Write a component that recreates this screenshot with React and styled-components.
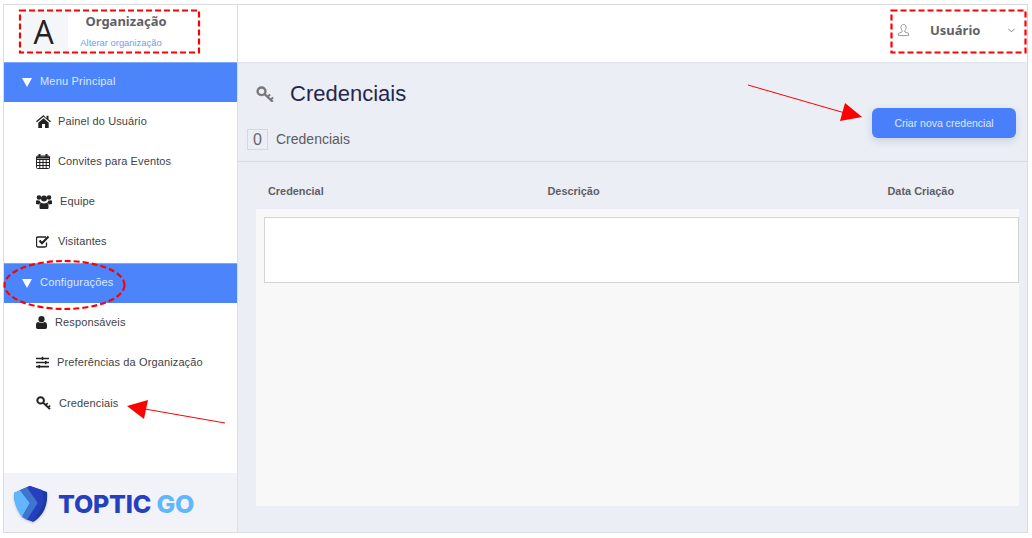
import styled, { createGlobalStyle } from 'styled-components';
import { ChevronDown } from 'lucide-react';
import { FaSlidersH } from 'react-icons/fa';

const GlobalStyle = createGlobalStyle`
  html, body {
    margin: 0;
    padding: 0;
    background: #fff;
    font-family: "Liberation Sans", Arial, sans-serif;
  }
`;

const Page = styled.div`
  position: relative;
  width: 1032px;
  height: 538px;
  padding: 4px 4px 0 3px;
  box-sizing: border-box;
  overflow: hidden;
`;
const Frame = styled.div`
  display: grid;
  grid-template-columns: 234px 1fr;
  height: 529px;
  border: 1px solid #dcdcdc;
  box-sizing: border-box;
`;
const Sidebar = styled.aside`
  display: flex;
  flex-direction: column;
  border-right: 1px solid #dcdfe3;
  background: #fff;
  min-height: 0;
`;
const OrgBlock = styled.div`
  display: flex;
  height: 57px;
  padding: 5px 0 9px 19px;
  box-sizing: border-box;
`;
const OrgAvatar = styled.div`
  width: 45px;
  padding-right: 4px;
  box-sizing: border-box;
  display: flex;
  align-items: center;
  justify-content: center;
  background: #f5f6f9;
  color: #222;
  font: 400 32px "Open Sans", sans-serif;
`;
const OrgText = styled.div`
  display: flex;
  flex-direction: column;
  align-items: center;
  width: 113px;
  padding-top: 2px;
`;
const OrgName = styled.div`
  font: 700 13px "Noto Sans", sans-serif;
  color: #5f5f66;
  margin-left: 3px;
`;
const OrgLink = styled.a`
  margin: 7px 7px 0 0;
  font-size: 9.4px;
  color: #6f9bfa;
`;
const SectionHead = styled.div`
  display: flex;
  align-items: center;
  gap: 8px;
  height: 40px;
  margin-top: ${(p) => p.$gapTop || 0}px;
  padding: 0 0 3px 18px;
  background: #4b84fb;
  color: #dfe9ff;
  font-size: 11px;
  letter-spacing: 0.2px;
  border-top: 1px solid #7ea6fb;
  box-sizing: border-box;
`;
const Caret = styled.span`
  width: 0;
  height: 0;
  margin-top: 3px;
  border-left: 5px solid transparent;
  border-right: 5px solid transparent;
  border-top: 9px solid #fff;
`;
const MenuItem = styled.div`
  display: flex;
  align-items: center;
  gap: ${(p) => p.$gap || 8}px;
  height: 40px;
  padding: 0 0 ${(p) => (p.$flat ? 0 : 2)}px 32px;
  box-sizing: border-box;
  font-size: 11px;
  letter-spacing: 0.12px;
  color: #3f3f46;
  svg { color: #222; flex: none; }
`;
const Spacer = styled.div`
  flex: 1;
`;
const Brand = styled.div`
  display: flex;
  align-items: center;
  gap: 9px;
  height: 59px;
  padding: 2px 0 0 9px;
  background: #f1f3f8;
  box-sizing: border-box;
`;
const BrandName = styled.div`
  font: 800 25px Inter, sans-serif;
  letter-spacing: -0.2px;
  color: #2540bf;
  span { color: #62b6fb; }
`;
const Main = styled.main`
  display: flex;
  flex-direction: column;
  min-width: 0;
  background: #ebeef4;
`;
const TopBar = styled.header`
  display: flex;
  justify-content: flex-end;
  height: 57px;
  background: #fff;
  box-shadow: 0 1px 2px rgba(0, 0, 0, 0.06);
`;
const UserMenu = styled.div`
  display: flex;
  align-items: center;
  width: 133px;
  height: 44px;
  margin-top: 3px;
  padding-left: 3px;
  box-sizing: border-box;
  color: #5f5f66;
`;
const UserName = styled.div`
  font: 700 13px "Noto Sans", sans-serif;
  margin-left: 20px;
  margin-right: 26px;
`;
const PageHead = styled.div`
  display: flex;
  justify-content: space-between;
  height: 99px;
  border-bottom: 1px solid #d8dadf;
  padding: 0 11px 0 9px;
`;
const TitleColumn = styled.div`
  display: flex;
  flex-direction: column;
`;
const TitleRow = styled.div`
  display: flex;
  align-items: center;
  gap: 16px;
  height: 32px;
  margin-top: 16px;
  padding-left: 9px;
  color: #77777c;
`;
const Title = styled.h1`
  margin: 0;
  font-size: 22px;
  font-weight: 400;
  color: #25274d;
`;
const CountRow = styled.div`
  display: flex;
  align-items: center;
  gap: 8px;
  margin-top: 19px;
`;
const CountBadge = styled.div`
  width: 21px;
  height: 21px;
  display: flex;
  align-items: center;
  justify-content: center;
  border: 1px solid #d6d8dc;
  box-sizing: border-box;
  font-size: 16px;
  color: #66666c;
`;
const CountLabel = styled.div`
  font-size: 14px;
  margin-top: -1px;
  color: #5b5b62;
`;
const CreateButton = styled.button`
  width: 144px;
  height: 30px;
  margin-top: 46px;
  border: none;
  border-radius: 6px;
  background: #4a7ffb;
  color: #dfe8fd;
  font: 400 10.5px "Liberation Sans", sans-serif;
  box-shadow: 0 3px 8px rgba(60, 90, 160, 0.2);
`;
const TableArea = styled.div`
  flex: 1;
  display: flex;
  flex-direction: column;
  padding: 0 8px 26px 18px;
  min-height: 0;
`;
const HeaderRow = styled.div`
  display: grid;
  grid-template-columns: 279.5px 340px 1fr;
  align-items: center;
  height: 47px;
  padding: 10px 0 0 12px;
  box-sizing: border-box;
  font-size: 10.9px;
  font-weight: 700;
  color: #5f5f66;
`;
const TableBody = styled.div`
  flex: 1;
  background: #f8f8f9;
  padding: 8px 0 0 8px;
`;
const EmptyRow = styled.div`
  height: 66px;
  background: #fff;
  border: 1px solid #d4d4d4;
  box-sizing: border-box;
`;
const Annotations = styled.svg`
  position: absolute;
  left: 0;
  top: 0;
  pointer-events: none;
`;

function HomeIcon() {
  return (
    <svg width="15" height="13" viewBox="0 0 15 13" fill="#222">
      <path d="M7.5 0L0 6.300l.9 1L7.500 1.800l6.600 5.500.9-1-2.500-2.100V.8h-2v2.700z" />
      <path d="M2.300 7.700L7.500 3.300l5.200 4.400V13H9V9H6v4H2.300z" />
    </svg>
  );
}

function CalendarIcon() {
  return (
    <svg width="14" height="15" viewBox="0 0 14 15" fill="none" stroke="#222" strokeWidth="1">
      <rect x="0.5" y="2" width="13" height="12.500" rx="1" />
      <path d="M0.5 5.500h13M0.5 8.500h13M0.5 11.500h13M3.800 5.500v9M7 5.500v9M10.200 5.500v9" />
      <path d="M1 3.500h12" strokeWidth="2" />
      <path d="M3.500 0v3M10.500 0v3" strokeWidth="2" />
    </svg>
  );
}

function UsersIcon() {
  return (
    <svg width="16" height="15" viewBox="0 0 16 15" fill="#222">
      <circle cx="3" cy="3.500" r="2.300" />
      <circle cx="13" cy="3.500" r="2.300" />
      <circle cx="8" cy="4.500" r="3" />
      <path d="M0 10V7.500C0 6.500.8 6 1.500 6.200c.6.300 1.300.4 2 .3.300 1 .9 1.700 1.500 2.200-1 .4-1.700 1-2 1.800z" />
      <path d="M16 10V7.500c0-1-.8-1.500-1.500-1.300-.6.300-1.300.4-2 .3-.3 1-.9 1.700-1.500 2.200 1 .4 1.700 1 2 1.800z" />
      <path d="M3.500 13.500v-2.300c0-1.500 1-2.400 2-2.400.7.500 1.600.8 2.500.8s1.800-.3 2.500-.8c1 0 2 .9 2 2.400v2.300c0 1-.7 1.500-1.500 1.500h-6c-.8 0-1.500-.5-1.500-1.500z" />
    </svg>
  );
}

function CheckIcon() {
  return (
    <svg width="14" height="13" viewBox="0 0 14 13" fill="none" stroke="#222">
      <path d="M10.500 7.500V10.500a1.500 1.500 0 0 1-1.500 1.500H2a1.500 1.500 0 0 1-1.500-1.500V3.500A1.500 1.500 0 0 1 2 2h8" strokeWidth="1.300" />
      <path d="M3.500 5.500l2.500 2.700 6.500-6.700" strokeWidth="2.200" />
    </svg>
  );
}

function UserIcon() {
  return (
    <svg width="11" height="13" viewBox="0 0 11 13" fill="#222">
      <circle cx="5.500" cy="3.200" r="3.100" />
      <path d="M0 11.300V9c0-1.800 1-3 2.500-3 .8.700 1.900 1 3 1s2.200-.3 3-1C10 6 11 7.200 11 9v2.300c0 1-.7 1.700-1.700 1.700H1.700C.7 13 0 12.300 0 11.300z" />
    </svg>
  );
}

function KeyIcon({ size = 15, color = '#222' }) {
  return (
    <svg width={size} height={size * 0.93} viewBox="0 0 15 14" fill="none" stroke={color}>
      <ellipse cx="4.600" cy="4.400" rx="3.300" ry="3.200" strokeWidth="2" />
      <path d="M7.200 6.800l6.800 6.400" strokeWidth="1.900" />
      <path d="M9.800 8.800l2-1.600M12.300 11.200l2-1.600" strokeWidth="1.600" />
    </svg>
  );
}

function UserOutlineIcon() {
  return (
    <svg width="13" height="14" viewBox="0 0 14 14" fill="none" stroke="#85858a" strokeWidth="0.9">
      <path d="M7 1c-2 0-2.800 1.400-2.800 3s.8 3.200 1.400 3.800v1.200L1.500 10.700V13h11v-2.300L8.400 9V7.800c.6-.6 1.400-2.200 1.400-3.800S9 1 7 1z" />
    </svg>
  );
}

function LogoMark() {
  return (
    <svg width="36" height="38" viewBox="0 0 36 38" style={{ filter: 'drop-shadow(0 1px 1px rgba(40,60,120,.25))' }}>
      <path d="M17 1l17 6c1 11-2 23-14 30C7 32 1 20 1 8z" fill="#1e3a9e" />
      <path d="M1 8l6-3 10 13-8 14C4 26 .5 17 1 8z" fill="#62b6fb" />
      <path d="M7 5l7-3 11 16-11 17-5-3 8-14z" fill="#3f74cf" />
      <path d="M14 2l3-1 12 4 2 12-10 19-7-1 11-17z" fill="#2540bf" />
    </svg>
  );
}

export default function App() {
  return (
    <Page>
      <GlobalStyle />
      <Frame>
        <Sidebar>
          <OrgBlock>
            <OrgAvatar>A</OrgAvatar>
            <OrgText>
              <OrgName>Organização</OrgName>
              <OrgLink>Alterar organização</OrgLink>
            </OrgText>
          </OrgBlock>
          <SectionHead><Caret />Menu Principal</SectionHead>
          <MenuItem $gap={7}><HomeIcon />Painel do Usuário</MenuItem>
          <MenuItem><CalendarIcon />Convites para Eventos</MenuItem>
          <MenuItem><UsersIcon />Equipe</MenuItem>
          <MenuItem><CheckIcon />Visitantes</MenuItem>
          <SectionHead $gapTop={1}><Caret />Configurações</SectionHead>
          <MenuItem><UserIcon />Responsáveis</MenuItem>
          <MenuItem><FaSlidersH size={13} />Preferências da Organização</MenuItem>
          <MenuItem $flat><KeyIcon />Credenciais</MenuItem>
          <Spacer />
          <Brand>
            <LogoMark />
            <BrandName>TOPTIC <span>GO</span></BrandName>
          </Brand>
        </Sidebar>
        <Main>
          <TopBar>
            <UserMenu>
              <UserOutlineIcon />
              <UserName>Usuário</UserName>
              <ChevronDown size={11} color="#77777c" />
            </UserMenu>
          </TopBar>
          <PageHead>
            <TitleColumn>
              <TitleRow>
                <KeyIcon size={18} color="#77777c" />
                <Title>Credenciais</Title>
              </TitleRow>
              <CountRow>
                <CountBadge>0</CountBadge>
                <CountLabel>Credenciais</CountLabel>
              </CountRow>
            </TitleColumn>
            <CreateButton>Criar nova credencial</CreateButton>
          </PageHead>
          <TableArea>
            <HeaderRow>
              <div>Credencial</div>
              <div>Descrição</div>
              <div>Data Criação</div>
            </HeaderRow>
            <TableBody>
              <EmptyRow />
            </TableBody>
          </TableArea>
        </Main>
      </Frame>
      <Annotations width="1032" height="538" viewBox="0 0 1032 538">
        <g fill="none" stroke="#f00" strokeWidth="2.200" strokeDasharray="6 3">
          <rect x="20" y="10.500" width="179" height="42" />
          <rect x="891.500" y="10.500" width="134" height="42" />
          <ellipse cx="64.500" cy="285" rx="60" ry="24" />
        </g>
        <g stroke="#f00" fill="#f00">
          <path d="M225 423L145 409" fill="none" />
          <path d="M127 406L148 400L144 419z" stroke="none" />
          <path d="M748 85L845 113" fill="none" />
          <path d="M862 117L845 103L840 121z" stroke="none" />
        </g>
      </Annotations>
    </Page>
  );
}
